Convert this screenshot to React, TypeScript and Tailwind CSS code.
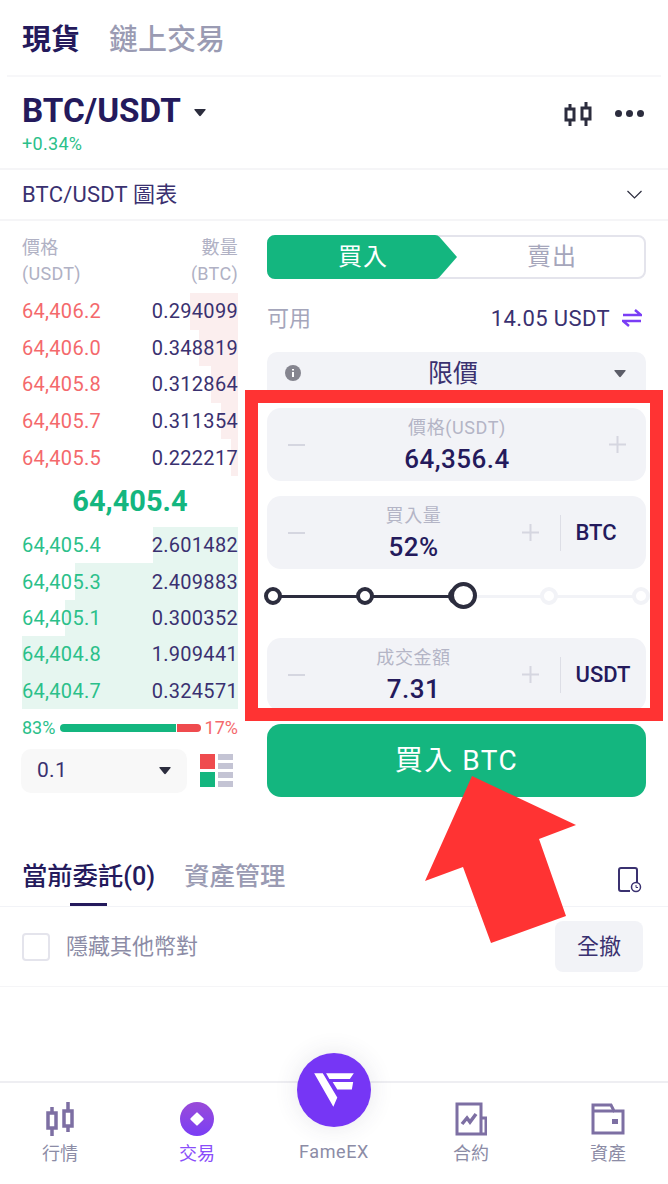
const font = { fontFamily: "Roboto, 'Noto Sans CJK TC', sans-serif" };

const asks = [
  { price: "64,406.2", qty: "0.294099", w: 48 },
  { price: "64,406.0", qty: "0.348819", w: 39 },
  { price: "64,405.8", qty: "0.312864", w: 27 },
  { price: "64,405.7", qty: "0.311354", w: 17 },
  { price: "64,405.5", qty: "0.222217", w: 7 },
];

const bids = [
  { price: "64,405.4", qty: "2.601482", w: 85 },
  { price: "64,405.3", qty: "2.409883", w: 163 },
  { price: "64,405.1", qty: "0.300352", w: 173 },
  { price: "64,404.8", qty: "1.909441", w: 216 },
  { price: "64,404.7", qty: "0.324571", w: 216 },
];

function Minus() {
  return <div className="w-[17px] h-[2px] bg-[#d5d6e0]" />;
}

function Plus() {
  return (
    <svg width="17" height="17" viewBox="0 0 17 17" className="text-[#d5d6e0]">
      <path d="M0 8.5h17M8.5 0v17" stroke="currentColor" strokeWidth="2" />
    </svg>
  );
}

function Stepper({ label, value, unit, className }: { label: string; value: string; unit?: string; className?: string }) {
  return (
    <div className={`flex items-center h-[73px] bg-[#f2f3f7] rounded-[14px] pl-[21px] ${unit ? "pr-0" : "pr-[20px]"} ${className ?? ""}`}>
      <Minus />
      <div className="flex-1 h-full pt-[8px] flex flex-col items-center">
        <span className="text-[18px] leading-[24px] tracking-[0.6px] text-[#b4b5c6]">{label}</span>
        <span className="text-[26px] leading-[38px] font-medium tracking-[0.5px] text-[#241a5c]">{value}</span>
      </div>
      <Plus />
      {unit && (
        <>
          <div className="w-px h-[36px] bg-[#dddee6] ml-[21px]" />
          <span className="w-[85px] pl-[14.5px] text-[22px] font-medium text-[#241a5c]">{unit}</span>
        </>
      )}
    </div>
  );
}

function Caret({ color, className }: { color: string; className?: string }) {
  return (
    <svg width="12" height="9" viewBox="0 0 12 9" className={className}>
      <path d="M1 1h10a.6.6 0 0 1 .5 1L7 7.6a1.2 1.2 0 0 1-2 0L.5 2A.6.6 0 0 1 1 1z" fill={color} />
    </svg>
  );
}

function Candles({ className }: { className: string }) {
  return (
    <svg width="28" height="26" viewBox="0 0 28 26" fill="none" stroke="currentColor" strokeWidth="3" className={className}>
      <rect x="2" y="7" width="8" height="11" />
      <path d="M6 2v5M6 18v6" />
      <rect x="18" y="6" width="8" height="11" />
      <path d="M22 0v6M22 17v7" />
    </svg>
  );
}

function Dot({ filled, solid }: { filled: boolean; solid?: boolean }) {
  return (
    <div className={`relative w-[18px] h-[18px] rounded-full border-[4px] ${solid ? "bg-[#2c2d3e]" : "bg-white"} ${filled ? "border-[#2c2d3e]" : "border-[#f2f3f7]"}`} />
  );
}

function NavItem({ label, children, active }: { label: string; children: React.ReactNode; active?: boolean }) {
  return (
    <div className="w-[100px] flex flex-col items-center">
      <div className="h-[34px] flex items-center justify-center">{children}</div>
      <span className={`text-[18px] leading-[26px] mt-[5px] ${active ? "text-[#8a4dfa]" : "text-[#8c8ca6]"}`}>{label}</span>
    </div>
  );
}

export default function App() {
  return (
    <div className="relative w-[668px] h-[1184px] overflow-hidden bg-white flex flex-col" style={font}>
      {/* Tabs */}
      <div className="h-[77px] mx-[7px] px-[15px] pt-[6px] flex items-center gap-[29px] border-b-2 border-[#f7f7f9]">
        <span className="text-[29px] font-bold text-[#241a5c]">現貨</span>
        <span className="text-[29px] font-medium text-[#9a9bb3]">鏈上交易</span>
      </div>

      {/* Pair */}
      <div className="h-[91px] px-[22px] flex items-start justify-between">
        <div className="pt-[15px]">
          <div className="flex items-center">
            <span className="text-[33.3px] leading-[38px] font-bold text-[#241a5c]">BTC/USDT</span>
            <Caret color="#2c2d3e" className="ml-[13px] mt-[3px]" />
          </div>
          <div className="text-[18px] leading-[22px] tracking-[0.3px] text-[#2bc08a] mt-[3px]">+0.34%</div>
        </div>
        <div className="flex items-center gap-[23px] pt-[22px] pr-[2px]">
          <Candles className="text-[#2c2d3e] mt-[3px]" />
          <div className="flex gap-[4px]">
            <div className="w-[7px] h-[7px] rounded-full bg-[#2c2d3e]" />
            <div className="w-[7px] h-[7px] rounded-full bg-[#2c2d3e]" />
            <div className="w-[7px] h-[7px] rounded-full bg-[#2c2d3e]" />
          </div>
        </div>
      </div>

      {/* Chart row */}
      <div className="h-[53px] pl-[22px] pr-[26px] flex items-center justify-between border-y-2 border-[#f5f5f7]">
        <span className="text-[22px] tracking-[0.2px] text-[#3a3170]">BTC/USDT 圖表</span>
        <svg width="15" height="9" viewBox="0 0 15 9" fill="none" stroke="#2c2d3e" strokeWidth="1.2">
          <path d="M.5 1l7 7 7-7" />
        </svg>
      </div>

      {/* Trade area */}
      <div className="h-[625px] flex pl-[22px] pt-[14px]">
        {/* Order book */}
        <div className="w-[216px] flex flex-col">
          <div className="flex justify-between text-[18px] leading-[26px] tracking-[0.3px] text-[#b0b1c4]">
            <div>價格<br />(USDT)</div>
            <div className="text-right">數量<br />(BTC)</div>
          </div>
          <div className="mt-[6px] flex flex-col">
            {asks.map((row) => (
              <div key={row.price} className="relative h-[36.6px] flex items-center justify-between text-[20px] tracking-[0.3px]">
                <div className="absolute right-0 inset-y-0 bg-[#fbeeee]" style={{ width: row.w }} />
                <span className="relative text-[#f4696c]">{row.price}</span>
                <span className="relative text-[#3a3170]">{row.qty}</span>
              </div>
            ))}
          </div>
          <div className="h-[51px] flex items-center justify-center text-[29px] font-bold text-[#14b67f]">64,405.4</div>
          <div className="flex flex-col">
            {bids.map((row) => (
              <div key={row.price} className="relative h-[36.4px] flex items-center justify-between text-[20px] tracking-[0.3px]">
                <div className="absolute right-0 inset-y-0 bg-[#e6f6f0]" style={{ width: row.w }} />
                <span className="relative text-[#2bc08a]">{row.price}</span>
                <span className="relative text-[#3a3170]">{row.qty}</span>
              </div>
            ))}
          </div>
          <div className="flex items-center justify-between mt-[8px] h-[22px] text-[18px]">
            <span className="text-[#2bc08a]">83%</span>
            <div className="flex w-[141px] h-[8px] gap-[1px]">
              <div className="w-[116px] bg-[#14b67f] rounded-l-full" />
              <div className="flex-1 bg-[#ef4b4e] rounded-r-full" />
            </div>
            <span className="text-[#f4696c]">17%</span>
          </div>
          <div className="flex items-center justify-between mt-[10px]">
            <div className="w-[166px] -ml-px h-[44px] rounded-[10px] bg-[#f8f8f8] flex items-center justify-between pl-[16px] pr-[16px] text-[21px] tracking-[0.3px] text-[#3a3170]">
              0.1
              <Caret color="#2c2d3e" />
            </div>
            <div className="grid grid-cols-[15px_15px] gap-x-[3px] pr-[5px]">
              <div className="h-[15px] bg-[#ef4b4e] row-span-2" />
              <div className="h-[6px] bg-[#c4c4d4]" />
              <div className="h-[6px] mt-[3px] bg-[#c4c4d4]" />
              <div className="h-[15px] mt-[3px] bg-[#14b67f] row-span-2" />
              <div className="h-[6px] mt-[3px] bg-[#c4c4d4]" />
              <div className="h-[6px] mt-[3px] bg-[#c4c4d4]" />
            </div>
          </div>
        </div>

        {/* Order form */}
        <div className="w-[379px] ml-[29px] flex flex-col">
          <div className="relative h-[44px] rounded-[8px] border-2 border-[#e4e4ec] flex text-[24px] tracking-[1px]">
            <svg width="192" height="44" viewBox="0 0 192 44" className="absolute -left-[2px] -top-[2px]">
              <path d="M8 0H168a6 6 0 0 1 4.5 2L190 22L172.500 42a6 6 0 0 1-4.500 2H8a8 8 0 0 1-8-8V8a8 8 0 0 1 8-8z" fill="#14b67f" />
            </svg>
            <span className="relative w-[188px] text-center leading-[40px] text-white">買入</span>
            <span className="flex-1 pl-[3px] text-center leading-[40px] text-[#a5a6bb]">賣出</span>
          </div>
          <div className="flex items-center justify-between mt-[21px] h-[36px] text-[22px]">
            <span className="text-[#a5a6bb]">可用</span>
            <div className="flex items-center gap-[12px] pr-[4px]">
              <span className="tracking-[0.4px] text-[#3a3170]">14.05 USDT</span>
              <svg width="20" height="18" viewBox="0 0 20 18" fill="none" stroke="#7a3df5" strokeWidth="2.500">
                <path d="M1 6h18L13 1M19 12H1l6 5" />
              </svg>
            </div>
          </div>
          <div className="relative h-[44px] mt-[16px] pr-[7px] rounded-t-[10px] bg-[#f2f3f7] flex items-center justify-center text-[25px] text-[#3a3170]">
            <svg width="16" height="16" viewBox="0 0 16 16" className="absolute left-[18px] top-[13px]">
              <circle cx="8" cy="8" r="8" fill="#85858f" />
              <path d="M8 4v1.500M8 7v5" stroke="#fff" strokeWidth="2" />
            </svg>
            限價
            <Caret color="#5c5d68" className="absolute right-[20px] top-[17px]" />
          </div>
          <Stepper label="價格(USDT)" value="64,356.4" className="mt-[12px]" />
          <Stepper label="買入量" value="52%" unit="BTC" className="mt-[15px]" />
          <div className="relative h-[69px] pt-[18px] flex items-start justify-between -ml-[3px] -mr-[4px]">
            <div className="absolute left-[8px] right-[8px] top-[26px] h-[3px] bg-[#f2f3f7]" />
            <div className="absolute left-[8px] w-[191px] top-[26px] h-[3px] bg-[#2c2d3e]" />
            <Dot filled />
            <Dot filled />
            <Dot filled solid />
            <Dot filled={false} />
            <Dot filled={false} />
            {/* thumb sits at 52%, just past the 50% stop */}
            <div className="absolute left-[186px] top-[13px] w-[27px] h-[27px] rounded-full bg-white border-[4px] border-[#2c2d3e]" />
          </div>
          <Stepper label="成交金額" value="7.31" unit="USDT" />
          <div className="h-[73px] mt-[13px] rounded-[14px] bg-[#14b67f] flex items-center justify-center text-[28px] tracking-[1.5px] text-white">買入 BTC</div>
        </div>
      </div>

      {/* Orders */}
      <div className="h-[61px] px-[22px] flex items-start justify-between border-b border-[#f2f3f7]">
        <div className="flex gap-[29px]">
          <div className="relative h-[60px] flex flex-col items-center">
            <span className="text-[25.3px] leading-[36px] mt-[13px] font-medium text-[#241a5c]">當前委託(0)</span>
            <div className="absolute bottom-0 w-[37px] h-[3px] bg-[#241a5c]" />
          </div>
          <span className="text-[25.3px] leading-[36px] mt-[13px] font-medium text-[#9a9bb3]">資產管理</span>
        </div>
        <svg width="24" height="26" viewBox="0 0 24 26" fill="none" stroke="#3a3170" strokeWidth="2" className="mt-[21px] mr-[4px]">
          <path d="M12 24H3a2 2 0 0 1-2-2V3a2 2 0 0 1 2-2h14a2 2 0 0 1 2 2v13" />
          <circle cx="18" cy="20" r="4.500" strokeWidth="1.500" />
          <path d="M18 18v2.500h2" strokeWidth="1" />
        </svg>
      </div>
      <div className="h-[80px] pl-[22px] pr-[25px] flex items-center justify-between border-b border-[#f5f5f7]">
        <div className="flex items-center gap-[16px]">
          <div className="w-[28px] h-[28px] rounded-[4px] border-2 border-[#e4e4ec]" />
          <span className="text-[22px] text-[#8c8ca6]">隱藏其他幣對</span>
        </div>
        <div className="w-[88px] h-[51px] rounded-[8px] bg-[#f2f3f7] flex items-center justify-center text-[22px] text-[#3a3170]">全撤</div>
      </div>

      <div className="flex-1" />

      {/* Bottom nav */}
      <div className="h-[103px] border-t-2 border-[#eeeef2] flex justify-between px-[10px] pt-[19px]">
        <NavItem label="行情">
          <svg width="28" height="34" viewBox="0 0 28 34" fill="none" stroke="#7d6fa3" strokeWidth="3.500">
            <rect x="2" y="11" width="8" height="15" />
            <path d="M6 5v6M6 26v8" />
            <rect x="18" y="9" width="8" height="15" />
            <path d="M22 0v9M22 24v6" />
          </svg>
        </NavItem>
        <NavItem label="交易" active>
          <div className="w-[34px] h-[34px] rounded-full bg-gradient-to-b from-[#9a4ad8] to-[#7a3df5] flex items-center justify-center">
            <div className="w-[10px] h-[10px] bg-white rotate-45 rounded-[1px]" />
          </div>
        </NavItem>
        <div className="w-[100px] flex flex-col items-center">
          <span className="text-[18px] leading-[26px] tracking-[0.6px] mt-[37px] text-[#8c8ca6]">FameEX</span>
        </div>
        <NavItem label="合約">
          <svg width="32" height="34" viewBox="0 0 32 34" fill="none" stroke="#7d6fa3" strokeWidth="3">
            <path d="M24 32H2V2h24v30zM26 16h5v16h-5" />
            <path d="M7 22l5-6 3 4 6-8" strokeWidth="3.500" />
          </svg>
        </NavItem>
        <NavItem label="資產">
          <svg width="34" height="32" viewBox="0 0 34 32" fill="none" stroke="#7d6fa3" strokeWidth="3">
            <path d="M2 30V2h18l3 6h9v22z" />
            <path d="M3 8h20" />
            <rect x="21" y="16" width="6" height="5" fill="#7d6fa3" stroke="none" />
          </svg>
        </NavItem>
      </div>

      {/* FameEX floating button */}
      <div className="absolute left-[297px] top-[1053px] w-[74px] h-[74px] rounded-full bg-[#7636f5] shadow-[0_0_24px_rgba(60,60,90,0.12)] flex items-center justify-center">
        <svg width="44" height="39" viewBox="66 80 132 118">
          <path d="M72 87H98L142 160L130 188ZM108 87H192L180 104H118ZM128 113H190L186 136H142Z" fill="#fff" />
        </svg>
      </div>

      {/* Red annotation box */}
      <div className="absolute left-[245px] top-[390px] w-[418px] h-[331px] border-[13px] border-[#ff3333]" />

      {/* Red annotation arrow */}
      <svg width="668" height="1184" viewBox="0 0 668 1184" className="absolute left-0 top-0 pointer-events-none">
        <path d="M472 776L576 825L539 839L566 916L491 943L463 867L425 881Z" fill="#ff3333" />
      </svg>
    </div>
  );
}
